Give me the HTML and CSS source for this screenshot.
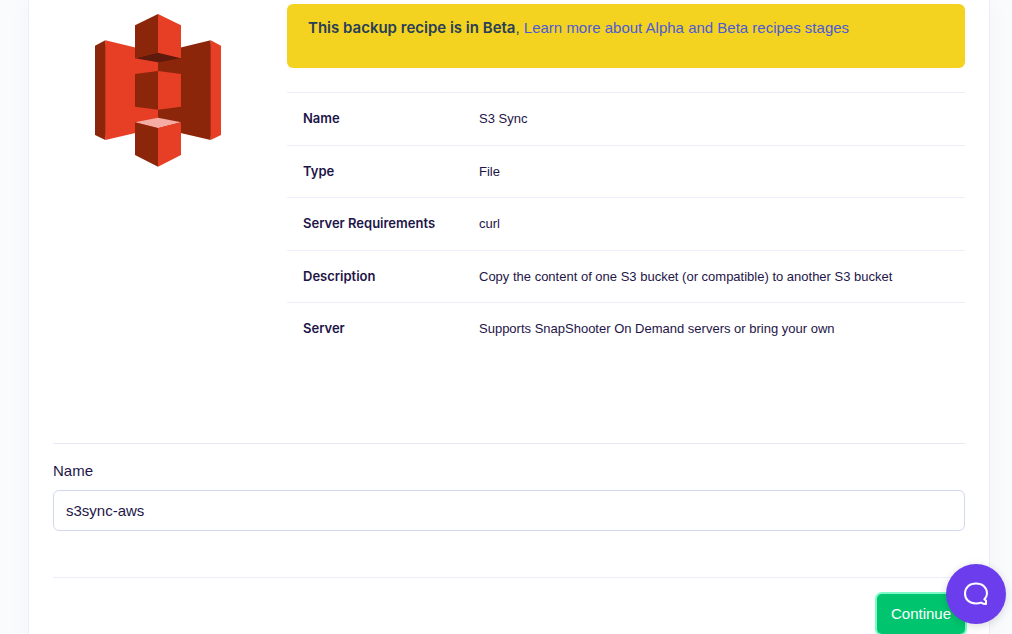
FILE: index.html
```html
<!DOCTYPE html>
<html lang="en">
<head>
<meta charset="utf-8">
<meta name="viewport" content="width=device-width, initial-scale=1">
<title>S3 Sync backup recipe</title>
<link rel="stylesheet" href="styles.css">
</head>
<body>
<main class="card">
  <section class="recipe">
    <div class="recipe-logo">
      <svg class="logo" viewBox="45 42 378 458" role="img" aria-label="Amazon S3">
        <path fill="#8c260b" d="M45 137 76 121 92 270 76 420 45 405zM392 121 234 159V383L392 420 402 270z"/>
        <path fill="#e63f26" d="M76 121 234 159V383L76 420zM392 121 423 137V405L392 420z"/>
        <path fill="#8c260b" d="M165 222 234 213V329L165 320z"/>
        <path fill="#e63f26" d="M234 213 303 222V320L234 329z"/>
        <path fill="#5e1a0c" d="M165 175 234 157 303 175 234 187z"/>
        <path fill="#8c260b" d="M165 76 234 42V158L165 175z"/>
        <path fill="#e63f26" d="M234 42 303 76V175L234 158z"/>
        <path fill="#f5aca5" d="M165 367 234 353 303 367 234 385z"/>
        <path fill="#8c260b" d="M165 367 234 384V500L165 465z"/>
        <path fill="#e63f26" d="M234 384 303 367V465L234 500z"/>
      </svg>
    </div>
    <div class="recipe-info">
      <div class="alert"><strong>This backup recipe is in Beta</strong>, <a href="#stages">Learn more about Alpha and Beta recipes stages</a></div>
      <table class="details">
        <tr><th scope="row">Name</th><td>S3 Sync</td></tr>
        <tr><th scope="row">Type</th><td>File</td></tr>
        <tr><th scope="row">Server Requirements</th><td>curl</td></tr>
        <tr><th scope="row">Description</th><td>Copy the content of one S3 bucket (or compatible) to another S3 bucket</td></tr>
        <tr><th scope="row">Server</th><td>Supports SnapShooter On Demand servers or bring your own</td></tr>
      </table>
    </div>
  </section>
  <form class="form">
    <label class="label" for="name">Name</label>
    <input class="input" id="name" type="text" value="s3sync-aws">
    <div class="actions"><button class="button" type="submit">Continue</button></div>
  </form>
</main>
<button class="chat" type="button" aria-label="Open chat">
  <svg class="chat-icon" viewBox="0 0 26 24" aria-hidden="true"><path d="M21.3 17.4C23 15.8 24 13.800 24 11.500C24 5.200 19.500 1.500 13 1.500S2 5.200 2 11.500S6.500 21.500 13 21.500C14.800 21.500 16.500 21.200 18 20.600C19.600 21.500 21.300 22 23 22V18.500Z"/></svg>
</button>
</body>
</html>
```
FILE: styles.css
```css
* {
  box-sizing: border-box;
}

body {
  margin: 0;
  min-height: 100vh;
  padding: 0 22px 0 28px;
  overflow: hidden;
  background: #f9fbfd;
  color: #1e1548;
  font-family: "Liberation Sans", Arial, sans-serif;
  font-size: 15px;
  line-height: 1.5;
}

.card {
  min-height: 100vh;
  padding: 4px 24px 24px;
  background: #fff;
  border: solid #edeefc;
  border-width: 0 1px;
  box-shadow: 0 0 24px rgba(22, 28, 45, 0.03);
}

.recipe {
  display: grid;
  grid-template-columns: calc(25% - 18px) minmax(0, 1fr);
  gap: 24px;
  min-height: 439px;
}

.recipe-logo {
  padding-top: 10px;
  text-align: center;
}

.logo {
  width: 60%;
}

.alert {
  min-height: 64px;
  margin-bottom: 24px;
  padding: 13px 21px;
  border-radius: 6px;
  background: #f4d220;
  color: #283e59;
}

.alert strong,
.details th {
  font-family: Inter, "Liberation Sans", sans-serif;
  font-weight: 600;
}

.alert a {
  color: #4b5bd6;
  text-decoration: none;
}

.details {
  width: 100%;
  border-spacing: 0;
  font-size: 13px;
}

.details th,
.details td {
  padding: 16px;
  border-top: 1px solid #edeefc;
  text-align: left;
}

.details th {
  width: 176px;
  white-space: nowrap;
}

.form {
  padding-top: 16px;
  border-top: 1px solid #e6e8f6;
}

.label {
  display: block;
  margin-bottom: 7px;
}

.input {
  display: block;
  width: 100%;
  height: 41px;
  padding: 8px 12px;
  border: 1px solid #d2d8f0;
  border-radius: 6px;
  background: #fff;
  color: #1e1548;
  font: inherit;
}

.actions {
  display: flex;
  justify-content: flex-end;
  margin-top: 46px;
  padding-top: 16px;
  border-top: 1px solid #edeefc;
}

.button {
  height: 40px;
  padding: 9px 14px 8px;
  border: 0;
  border-radius: 5px;
  background: #00c56e;
  box-shadow: 0 0 0 2px #7dfac8;
  color: #fff;
  font: inherit;
}

.chat {
  position: fixed;
  right: 6px;
  bottom: 10px;
  display: grid;
  place-items: center;
  width: 60px;
  height: 60px;
  padding: 0;
  border: 0;
  border-radius: 50%;
  background: #6b3ded;
  box-shadow: 0 2px 8px rgba(0, 0, 0, 0.15);
}

.chat-icon {
  width: 26px;
  height: 24px;
  fill: none;
  stroke: #fff;
  stroke-width: 2;
  stroke-linejoin: round;
}
```
